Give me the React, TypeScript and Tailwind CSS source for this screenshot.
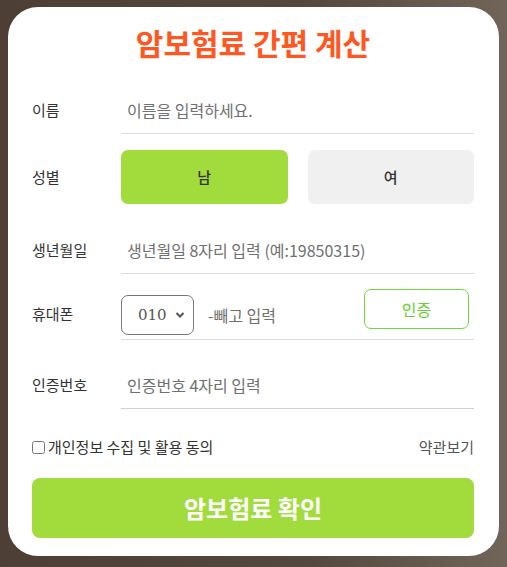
import React, { useState } from 'react';

const font = { fontFamily: '"Noto Sans CJK KR", "Noto Sans", sans-serif' };

const Field: React.FC<{ label: string; children: React.ReactNode; className?: string }> = ({ label, children, className }) => (
  <div className={`flex items-center ${className ?? ''}`}>
    <div className="w-[89px] shrink-0 text-[15px] text-[#333]">{label}</div>
    <div className="min-w-0 flex-1">{children}</div>
  </div>
);

export default function App() {
  const [gender, setGender] = useState<'m' | 'f'>('m');
  const [agree, setAgree] = useState(false);

  return (
    <div className="min-h-screen w-full bg-[linear-gradient(90deg,#4d3f35_0%,#54473d_60%,#716459_100%)] pt-[7px] pb-[11px]" style={font}>
      <div className="mx-[8px] rounded-[30px] bg-white pl-[24px] pr-[25px] pt-[15px] pb-[18px]">
        <h1 className="text-center text-[30px] font-bold leading-[40px] text-[#ff5722]">암보험료 간편 계산</h1>

        <Field label="이름" className="mt-[24px]">
          <input
            className="h-[48px] w-full border-b border-[#dddddd] px-[6px] text-[16px] text-[#333] outline-none placeholder:text-[#707070]"
            placeholder="이름을 입력하세요."
          />
        </Field>

        <Field label="성별" className="mt-[16px]">
          <div className="grid grid-cols-2 gap-[20px]">
            <button
              onClick={() => setGender('m')}
              className={`h-[54px] rounded-[7px] text-[15px] font-medium text-[#333] ${gender === 'm' ? 'bg-[#a1dc3c]' : 'bg-[#f0f0f0]'}`}
            >
              남
            </button>
            <button
              onClick={() => setGender('f')}
              className={`h-[54px] rounded-[7px] text-[15px] font-medium text-[#333] ${gender === 'f' ? 'bg-[#a1dc3c]' : 'bg-[#f0f0f0]'}`}
            >
              여
            </button>
          </div>
        </Field>

        <Field label="생년월일" className="mt-[22px]">
          <input
            className="h-[48px] w-full border-b border-[#dddddd] px-[6px] text-[16px] text-[#333] outline-none placeholder:text-[#707070]"
            placeholder="생년월일 8자리 입력 (예:19850315)"
          />
        </Field>

        <Field label="휴대폰" className="mt-[15px]">
          <div className="flex h-[51px] items-start border-b border-[#dddddd]">
            <div className="relative mt-[6px] h-[40px] w-[73px] shrink-0 rounded-[7px] border border-[#777]">
              <select
                className="h-full w-full appearance-none bg-transparent pl-[16px] text-[15px] text-[#555] outline-none"
                style={{ fontFamily: '"DejaVu Serif", serif' }}
                defaultValue="010"
              >
                <option>010</option>
                <option>011</option>
                <option>016</option>
              </select>
              <svg className="pointer-events-none absolute right-[8px] top-[15px]" width="10" height="8" viewBox="0 0 10 8">
                <path d="M1.5 2 L5 5.5 L8.5 2" fill="none" stroke="#555" strokeWidth="2" />
              </svg>
            </div>
            <input
              className="mt-[6px] h-[40px] w-0 min-w-0 flex-1 px-[14px] text-[16px] text-[#333] outline-none placeholder:text-[#707070]"
              placeholder="-빼고 입력"
            />
            <button className="mr-[5px] h-[40px] w-[105px] shrink-0 rounded-[7px] border border-[#71d83c] text-[16px] text-[#64d12e]">
              인증
            </button>
          </div>
        </Field>

        <Field label="인증번호" className="mt-[21px]">
          <input
            className="h-[48px] w-full border-b border-[#d0d0d0] px-[6px] text-[16px] text-[#333] outline-none placeholder:text-[#707070]"
            placeholder="인증번호 4자리 입력"
          />
        </Field>

        <div className="mt-[27px] flex items-center justify-between text-[15px] text-[#333]">
          <label className="flex items-center gap-[3px]">
            <input
              type="checkbox"
              checked={agree}
              onChange={(e) => setAgree(e.target.checked)}
              className="m-0 h-[13px] w-[13px]"
            />
            <span>개인정보 수집 및 활용 동의</span>
          </label>
          <a className="text-[#555]">약관보기</a>
        </div>

        <button className="mt-[19px] h-[60px] w-full rounded-[8px] bg-[#a1dc3c] text-[24px] font-bold text-white">
          암보험료 확인
        </button>
      </div>
    </div>
  );
}
